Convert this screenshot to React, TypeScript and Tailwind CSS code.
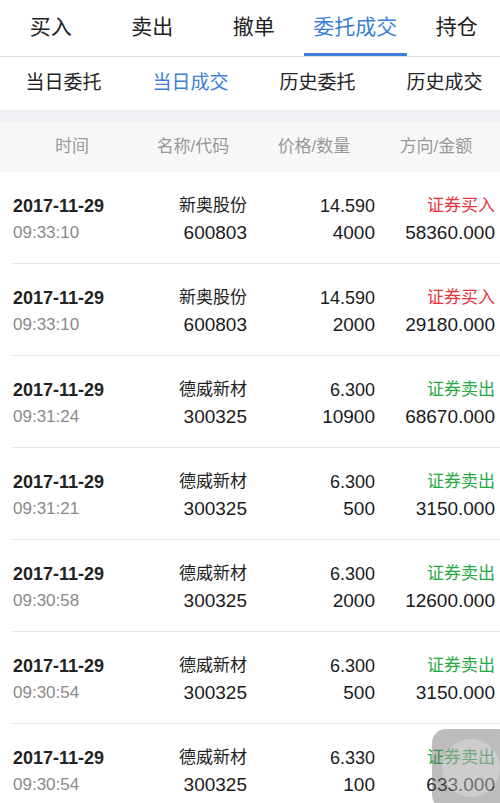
import React from 'react';

type Trade = {
  date: string;
  time: string;
  name: string;
  code: string;
  price: string;
  qty: string;
  side: 'buy' | 'sell';
  amount: string;
};

const trades: Trade[] = [
  { date: '2017-11-29', time: '09:33:10', name: '新奥股份', code: '600803', price: '14.590', qty: '4000', side: 'buy', amount: '58360.000' },
  { date: '2017-11-29', time: '09:33:10', name: '新奥股份', code: '600803', price: '14.590', qty: '2000', side: 'buy', amount: '29180.000' },
  { date: '2017-11-29', time: '09:31:24', name: '德威新材', code: '300325', price: '6.300', qty: '10900', side: 'sell', amount: '68670.000' },
  { date: '2017-11-29', time: '09:31:21', name: '德威新材', code: '300325', price: '6.300', qty: '500', side: 'sell', amount: '3150.000' },
  { date: '2017-11-29', time: '09:30:58', name: '德威新材', code: '300325', price: '6.300', qty: '2000', side: 'sell', amount: '12600.000' },
  { date: '2017-11-29', time: '09:30:54', name: '德威新材', code: '300325', price: '6.300', qty: '500', side: 'sell', amount: '3150.000' },
  { date: '2017-11-29', time: '09:30:54', name: '德威新材', code: '300325', price: '6.330', qty: '100', side: 'sell', amount: '633.000' },
];

const mainTabs = ['买入', '卖出', '撤单', '委托成交', '持仓'];
const subTabs = ['当日委托', '当日成交', '历史委托', '历史成交'];

const font = { fontFamily: '"Liberation Sans", "Noto Sans CJK SC", sans-serif' };

export default function App() {
  return (
    <div className="relative w-[500px] h-[803px] overflow-hidden bg-white text-[#1a1a1a]" style={font}>
      {/* top tabs */}
      <div className="flex h-[56px] w-[508px]">
        {mainTabs.map((t, i) => (
          <div key={t} className="relative flex w-[101.5px] items-center justify-center pb-[2px]">
            <span className={`text-[21px] ${i === 3 ? 'text-[#3d7fd6]' : 'text-[#222]'}`}>{t}</span>
            {i === 3 && <div className="absolute bottom-0 left-[-1px] h-[3px] w-[103px] bg-[#3d7fd6]" />}
          </div>
        ))}
      </div>
      <div className="h-px bg-[#dcdcdc]" />

      {/* sub tabs */}
      <div className="flex h-[53px] w-[508px]">
        {subTabs.map((t, i) => (
          <div key={t} className="flex w-[127px] items-center justify-center">
            <span className={`text-[19px] ${i === 1 ? 'text-[#3d7fd6]' : 'text-[#222]'}`}>{t}</span>
          </div>
        ))}
      </div>
      <div className="h-[12px] bg-[#efeff6]" />

      {/* header */}
      <div className="flex h-[50px] items-center bg-[#f7f7f7] text-[17px] text-[#999]">
        <div className="w-[144px] text-center">时间</div>
        <div className="w-[98px] text-center">名称/代码</div>
        <div className="w-[144px] text-center">价格/数量</div>
        <div className="w-[100px] text-center">方向/金额</div>
      </div>

      {/* rows */}
      <div>
        {trades.map((r, idx) => (
          <div key={idx} className="ml-[12px] flex h-[92px] border-b border-[#e8e8e8] pt-[22px] pl-px">
            <div className="w-[120px]">
              <div className="h-[24px] text-[18px] leading-[24px] font-bold text-[#222]">{r.date}</div>
              <div className="mt-[3px] h-[24px] text-[17px] leading-[24px] text-[#8a8a8a]">{r.time}</div>
            </div>
            <div className="w-[114px] text-right">
              <div className="h-[24px] text-[17px] leading-[24px] text-[#222]">{r.name}</div>
              <div className="mt-[3px] h-[24px] text-[19px] leading-[24px] text-[#1a1a1a]">{r.code}</div>
            </div>
            <div className="w-[128px] text-right">
              <div className="h-[24px] text-[18px] leading-[24px] text-[#1a1a1a]">{r.price}</div>
              <div className="mt-[3px] h-[24px] text-[19px] leading-[24px] text-[#1a1a1a]">{r.qty}</div>
            </div>
            <div className="w-[120px] text-right">
              <div className={`h-[24px] text-[17px] leading-[24px] ${r.side === 'buy' ? 'text-[#e8333d]' : 'text-[#27a844]'}`}>
                {r.side === 'buy' ? '证券买入' : '证券卖出'}
              </div>
              <div className="mt-[3px] h-[24px] text-[19px] leading-[24px] text-[#1a1a1a]">{r.amount}</div>
            </div>
          </div>
        ))}
      </div>

      {/* assistive touch button */}
      <div className="absolute left-[432px] top-[729px] h-[80px] w-[80px] rounded-[14px] bg-[#6b6b6b]/45">
        <div className="absolute left-[10px] top-[10px] h-[58px] w-[58px] rounded-full bg-white/25" />
      </div>
    </div>
  );
}
